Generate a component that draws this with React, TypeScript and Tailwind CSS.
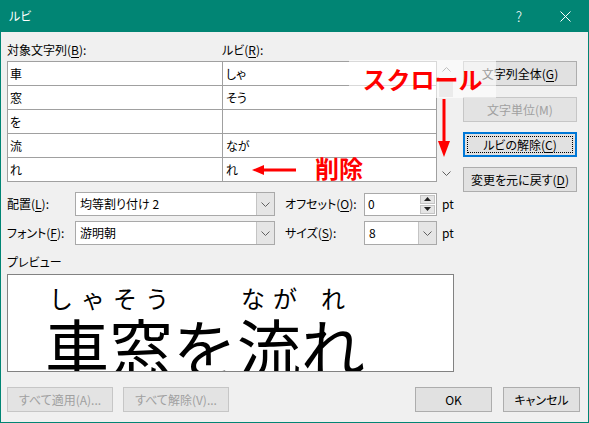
import type { ReactNode } from "react"

const rows = [
  ["車", "しゃ"],
  ["窓", "そう"],
  ["を", ""],
  ["流", "なが"],
  ["れ", "れ"],
]

const preview = [
  { base: "車", ruby: "しゃ" },
  { base: "窓", ruby: "そう" },
  { base: "を", ruby: "" },
  { base: "流", ruby: "なが" },
  { base: "れ", ruby: "れ" },
]

function Key({ k }: { k: string }) {
  return (
    <>
      (<u className="underline-offset-2">{k}</u>)
    </>
  )
}

function Chevron({ up = false }: { up?: boolean }) {
  return (
    <svg width="9" height="5" viewBox="0 0 9 5" className={up ? "rotate-180" : ""}>
      <polyline points="0.5,0.5 4.5,4.5 8.5,0.5" fill="none" stroke="#606060" strokeWidth="1" />
    </svg>
  )
}

function DialogButton({
  children,
  disabled = false,
  focused = false,
  className = "",
}: {
  children: ReactNode
  disabled?: boolean
  focused?: boolean
  className?: string
}) {
  let look = "border-[#adadad] bg-[#e1e1e1] text-black"
  if (disabled) look = "border-[#c6c6c6] bg-[#e3e3e3] text-[#a0a0a0]"
  if (focused) look = "border-[#0078d7] bg-[#e1e1e1] text-black shadow-[inset_0_0_0_1px_#0078d7]"
  return (
    <div className={`relative flex h-[25px] items-center justify-center whitespace-nowrap border text-[12px] ${look} ${className}`}>
      {focused && <span className="absolute inset-[3px] border border-dotted border-black" />}
      <span className="relative">{children}</span>
    </div>
  )
}

function Combo({ value, width }: { value: string; width: string }) {
  return (
    <div className={`flex h-[24px] border border-[#a9a9a9] bg-white ${width}`}>
      <div className="flex flex-1 items-center pl-[4px] text-[12px]">{value}</div>
      <div className="flex w-[18px] items-center justify-center border-l border-[#c4c4c4] bg-[#e5e5e5]">
        <Chevron />
      </div>
    </div>
  )
}

export default function App() {
  return (
    <div className="relative flex h-[423px] w-[589px] flex-col bg-[#018574] px-px pb-px font-['Noto_Sans_CJK_JP',sans-serif] text-black">
      {/* title bar */}
      <div className="flex h-[32px] items-center text-white">
        <span className="pl-[8px] text-[12px] [font-feature-settings:'palt']">ルビ</span>
        <div className="flex-1" />
        <div className="flex w-[46px] items-center justify-center text-[14px] font-light">?</div>
        <div className="flex w-[46px] items-center justify-center">
          <svg width="11" height="11" viewBox="0 0 11 11">
            <path d="M0.5 0.5 L10.5 10.5 M10.5 0.5 L0.5 10.5" stroke="#ffffff" strokeWidth="1" />
          </svg>
        </div>
      </div>

      <div className="flex flex-1 flex-col whitespace-nowrap bg-[#f0f0f0] pl-[6px] pr-[8px] pt-[10px] text-[12px] [font-feature-settings:'palt']">
        {/* ruby table + side buttons */}
        <div className="flex items-start">
          <div className="w-[448px]">
            <div className="mb-[3px] flex h-[16px] items-center leading-none">
              <span className="w-[215px]">
                対象文字列<Key k="B" />:
              </span>
              <span>
                ルビ<Key k="R" />:
              </span>
            </div>
            <div className="flex">
              <div className="grid w-[430px] grid-cols-[214px_1fr] gap-px border border-[#a0a0a0] bg-[#a0a0a0]">
                {rows.map(([base, ruby], i) => (
                  <div key={i} className="contents">
                    <div className="flex h-[23px] items-center bg-white pl-[2px]">{base}</div>
                    <div className="flex h-[23px] items-center bg-white pl-[3px]">{ruby}</div>
                  </div>
                ))}
              </div>
              <div className="flex h-[121px] w-[18px] flex-col items-center">
                <div className="flex h-[17px] items-center justify-center">
                  <Chevron up />
                </div>
                <div className="mt-[3px] h-[16px] w-[14px] bg-[#cdcdcd]" />
                <div className="flex-1" />
                <div className="flex h-[17px] items-center justify-center">
                  <Chevron />
                </div>
              </div>
            </div>
          </div>
          <div className="ml-[8px] mt-[19px] flex w-[114px] flex-col">
            <DialogButton>
              文字列全体<Key k="G" />
            </DialogButton>
            <DialogButton disabled className="mt-[11px]">
              文字単位(M)
            </DialogButton>
            <DialogButton focused className="mt-[10px]">
              ルビの解除<Key k="C" />
            </DialogButton>
            <DialogButton className="mt-[10px]">
              変更を元に戻す<Key k="D" />
            </DialogButton>
          </div>
        </div>

        {/* alignment / font settings */}
        <div className="flex h-[24px] items-center">
          <span className="w-[68px]">
            配置<Key k="L" />:
          </span>
          <Combo value="均等割り付け 2" width="w-[200px]" />
          <span className="ml-[10px] w-[79px]">
            オフセット<Key k="O" />:
          </span>
          <div className="flex h-[23px] w-[73px] border border-[#a9a9a9] bg-white">
            <div className="flex flex-1 items-center pl-[3px]">0</div>
            <div className="flex w-[17px] flex-col gap-px p-px">
              <div className="flex flex-1 items-center justify-center border border-[#c4c4c4] bg-[#e5e5e5]">
                <svg width="7" height="4" viewBox="0 0 7 4">
                  <polygon points="3.5,0 7,4 0,4" fill="#202020" />
                </svg>
              </div>
              <div className="flex flex-1 items-center justify-center border border-[#c4c4c4] bg-[#e5e5e5]">
                <svg width="7" height="4" viewBox="0 0 7 4">
                  <polygon points="0,0 7,0 3.5,4" fill="#202020" />
                </svg>
              </div>
            </div>
          </div>
          <span className="ml-[5px]">pt</span>
        </div>
        <div className="mt-[5px] flex h-[24px] items-center">
          <span className="w-[68px]">
            フォント<Key k="F" />:
          </span>
          <Combo value="游明朝" width="w-[200px]" />
          <span className="ml-[10px] w-[79px]">
            サイズ<Key k="S" />:
          </span>
          <Combo value="8" width="w-[73px]" />
          <span className="ml-[5px]">pt</span>
        </div>

        {/* preview */}
        <div className="mt-[9px] flex h-[16px] items-center">プレビュー</div>
        <div className="mt-[4px] h-[98px] w-[447px] overflow-hidden border border-[#828282] bg-white pl-[37px] pt-[11px] [font-feature-settings:normal]">
          <div className="flex">
            {preview.map((p, i) => (
              <div key={i} className="flex w-[64px] flex-col">
                <div className="flex h-[24px] justify-around text-[24px] leading-none">
                  {p.ruby.split("").map((c, j) => (
                    <span key={j}>{c}</span>
                  ))}
                </div>
                <div className="mt-[3px] h-[64px] text-[64px] leading-none">{p.base}</div>
              </div>
            ))}
          </div>
        </div>

        {/* bottom buttons */}
        <div className="mt-[15px] flex">
          <DialogButton disabled className="w-[106px]">
            すべて適用(A)...
          </DialogButton>
          <DialogButton disabled className="ml-[10px] w-[106px]">
            すべて解除(V)...
          </DialogButton>
          <div className="flex-1" />
          <DialogButton className="w-[77px]">OK</DialogButton>
          <DialogButton className="ml-[11px] w-[77px]">キャンセル</DialogButton>
        </div>
      </div>

      {/* annotations */}
      <div className="absolute left-[349px] top-[60px] flex h-[38px] w-[147px] items-center justify-center bg-white/60">
        <span className="text-[24px] font-bold leading-none text-[#ff0000]">スクロール</span>
      </div>
      <svg className="absolute left-[437px] top-[99px]" width="14" height="58" viewBox="0 0 14 58">
        <line x1="7" y1="0" x2="7" y2="44" stroke="#ff0000" strokeWidth="3" />
        <polygon points="1,42 13,42 7,58" fill="#ff0000" />
      </svg>
      <svg className="absolute left-[252px] top-[164px]" width="44" height="12" viewBox="0 0 44 12">
        <line x1="10" y1="6" x2="44" y2="6" stroke="#ff0000" strokeWidth="3" />
        <polygon points="0,6 12,1 12,11" fill="#ff0000" />
      </svg>
      <span className="absolute left-[315px] top-[156px] text-[24px] font-bold leading-none text-[#ff0000]">削除</span>
    </div>
  )
}
